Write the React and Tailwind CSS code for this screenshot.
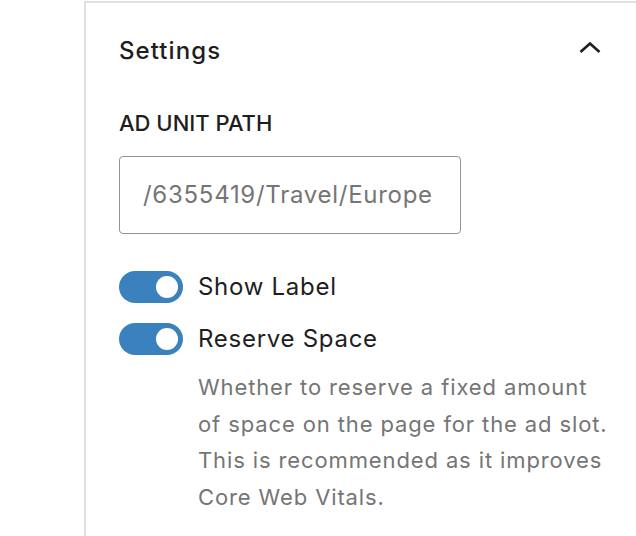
import React from 'react';

// Block inspector "Settings" panel for an ad slot
const Toggle = ({ checked = true }) => (
  <span
    className={`relative inline-flex h-[32px] w-[64px] shrink-0 items-center rounded-full ${
      checked ? 'bg-[#3a81bd]' : 'bg-[#949494]'
    }`}
  >
    <span
      className={`absolute top-[5px] h-[22px] w-[22px] rounded-full bg-white ${
        checked ? 'left-[37px]' : 'left-[5px]'
      }`}
    />
  </span>
);

const ToggleRow = ({ label }) => (
  <div className="flex items-center gap-[15px]">
    <Toggle />
    <span className="text-[24px] leading-[32px] tracking-[0.03em] text-[#1e1e1e]">{label}</span>
  </div>
);

export default function App() {
  return (
    <div
      className="h-[536px] w-[636px] overflow-hidden bg-white"
      style={{ fontFamily: 'Inter, "Noto Sans", sans-serif' }}
    >
      <div className="ml-[84px] h-full border-l-2 border-[#e0e0e0]">
        <div className="mt-px border-t-2 border-[#e0e0e0] pl-[33px] pr-[34px]">
          <div className="flex h-[96px] items-center justify-between">
            <h2 className="text-[24px] font-medium tracking-[0.045em] text-[#1e1e1e]">Settings</h2>
            <svg width="24" height="24" viewBox="0 0 24 24">
              <path d="M2.5 13 L12 4.5 L21.5 13" fill="none" stroke="#1e1e1e" strokeWidth="2.6" />
            </svg>
          </div>

          <label className="mt-[11px] block text-[22px] font-medium uppercase leading-[26px] text-[#1e1e1e]">
            Ad Unit Path
          </label>
          <div className="mt-[20px] flex h-[78px] w-[342px] items-center rounded-[4px] border-[1.5px] border-[#949494] pl-[23px]">
            <span className="text-[24px] tracking-[0.03em] text-[#757575]">/6355419/Travel/Europe</span>
          </div>

          <div className="mt-[37px] flex flex-col gap-[20px]">
            <ToggleRow label="Show Label" />
            <ToggleRow label="Reserve Space" />
          </div>

          <p className="ml-[79px] mt-[14px] w-[410px] text-[22px] leading-[36.5px] tracking-[0.04em] text-[#757575]">
            Whether to reserve a fixed amount of space on the page for the ad slot. This is
            recommended as it improves Core Web Vitals.
          </p>
        </div>
      </div>
    </div>
  );
}
